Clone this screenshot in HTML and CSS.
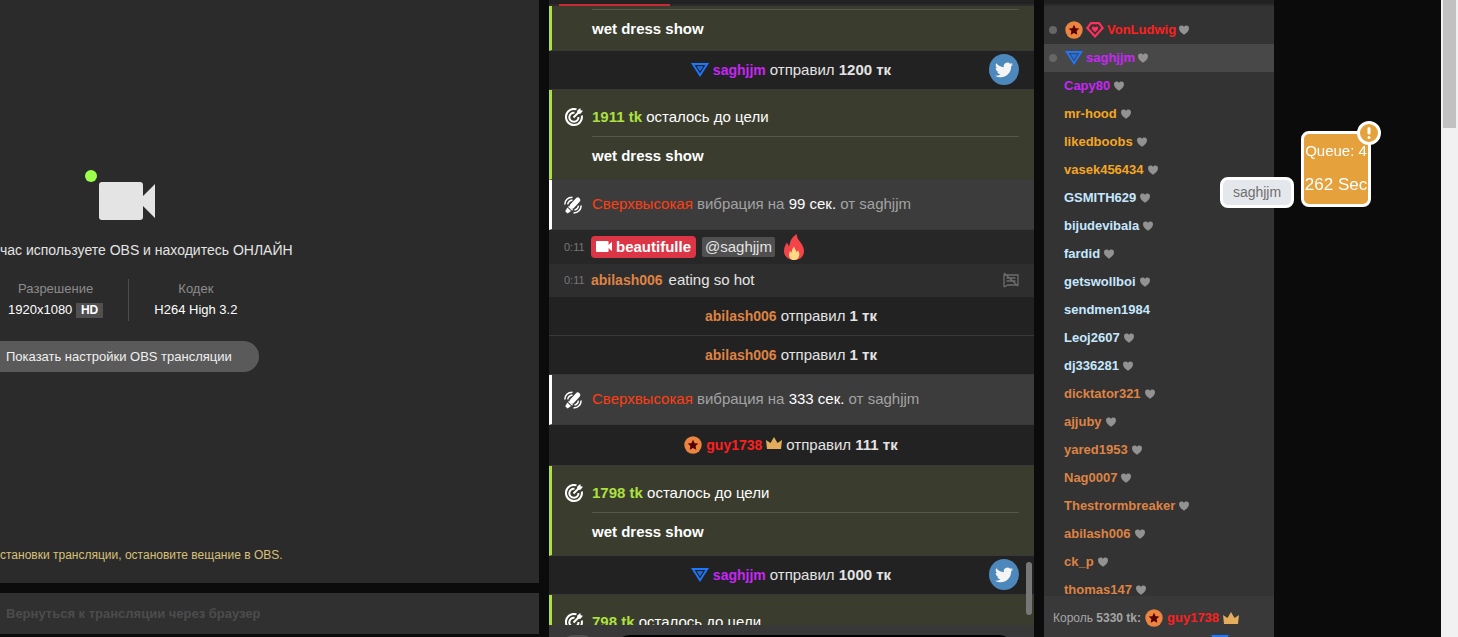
FILE: index.html
```
<!DOCTYPE html>
<html lang="ru">
<head>
<meta charset="utf-8">
<title>Трансляция</title>
<link rel="stylesheet" href="styles.css">
</head>
<body>
<svg class="sprite" aria-hidden="true">
  <symbol id="i-cam" viewBox="0 0 56 38"><path d="M3 0H41a3 3 0 0 1 3 3V14L56 2V36L44 24V35a3 3 0 0 1-3 3H3a3 3 0 0 1-3-3V3a3 3 0 0 1 3-3Z"/></symbol>
  <symbol id="i-tri" viewBox="0 0 18 14"><path fill="#1c78ff" fill-rule="evenodd" d="M0 0H18L9 14ZM3.600 2L9 10.400 14.400 2ZM5.800 3.200H12.200L9 8.200ZM8.300 4.600L9 5.700 9.700 4.600Z"/></symbol>
  <symbol id="i-star" viewBox="0 0 18 18"><circle cx="9" cy="9" r="8.7" fill="#eb8540"/><path fill="#530000" d="M9 3.8L10.6 7.2 14.3 7.6 11.6 10.1 12.3 13.8 9 12 5.7 13.8 6.4 10.1 3.7 7.6 7.4 7.2Z"/></symbol>
  <symbol id="i-gem" viewBox="0 0 18 16"><path fill="none" stroke="#ff2f5e" stroke-width="2.200" d="M5 1.200H13L16.700 6 9 14.400 1.300 6Z"/><path fill="#ff2f5e" d="M9 10.200L6 7.200C5 5 7.500 3.500 9 5.500 10.500 3.500 13 5 12 7.200Z"/></symbol>
  <symbol id="i-heart" viewBox="0 0 10 10"><path d="M5 9.700C2 7.500 0 5.800 0 3.200 0 0 4 0 5 1.900 6 0 10 0 10 3.200 10 5.800 8 7.500 5 9.700Z"/></symbol>
  <symbol id="i-crown" viewBox="0 0 16 12"><path fill="#e3ad5c" d="M1 12L0 3 4.500 6 8 0 11.500 6 16 3 15 12Z"/></symbol>
  <symbol id="i-goal" viewBox="0 0 18 18"><g fill="none" stroke="#fff" stroke-width="2"><path d="M11.500 1.400A8 8 0 1 0 16.800 7.500"/><path d="M9.500 4.700A4.600 4.600 0 1 0 13.500 9"/></g><path fill="#fff" d="M7.800 8.800L12 4.600 12.300 2.500 15.300 0 15.700 2.300 18 2.700 15.500 5.700 13.400 6 9.200 10.200Z"/></symbol>
  <symbol id="i-vibe" viewBox="0 0 18 18"><path stroke="#fff" stroke-width="5" stroke-linecap="round" d="M8 10.200L13.800 4"/><path fill="#fff" d="M4.800 9.800L9.200 14 8 14.600 4.200 11ZM3.400 11.600L7 15 3.600 17.600 1.200 15.300Z"/><g fill="none" stroke="#fff" stroke-width="1.500"><path d="M.8 8.500Q1.200 1.500 8.500 1.200M3.700 8.300Q4.500 4.400 8.500 3.900M17.200 9.500Q16.800 16.500 9.500 16.900M14.500 9.700Q13.800 13.500 10.500 14.100"/></g></symbol>
  <symbol id="i-fire" viewBox="0 0 20 26"><path fill="#f4444a" d="M12.700 0C13 5 15 6 17.300 9.500 18.500 11.500 20 13.500 20 17 20 22.500 16 26 10.500 26 4.500 26 0 22.500 0 17 0 13.500 1.500 10.500 3 8.500L5 12.500C6.500 8 6.500 4 12.700 0Z"/><path fill="#ffd983" d="M10 12.500C11 15 12 16 12.500 18L14 16.500C15.500 18.500 15.500 20 15.200 21.500 14.500 24.500 13 26 10 26 7 26 5 24 5 21 5 19.500 5.500 18 6.300 17L7.500 19C8 16.500 8 15 10 12.500Z"/></symbol>
  <symbol id="i-bird" viewBox="0 0 24 24"><path fill="#f4f4f4" d="M23.950 4.570a10 10 0 0 1-2.820.770 4.960 4.960 0 0 0 2.160-2.720c-.950.550-2 .950-3.130 1.180a4.920 4.920 0 0 0-8.380 4.480C7.690 8.090 4.070 6.130 1.640 3.160a4.820 4.820 0 0 0-.670 2.470c0 1.710.870 3.210 2.190 4.100a4.900 4.900 0 0 1-2.230-.620v.060a4.920 4.920 0 0 0 3.950 4.830 5 5 0 0 1-2.210.080 4.940 4.940 0 0 0 4.600 3.420A9.870 9.870 0 0 1 0 19.540a13.990 13.990 0 0 0 7.560 2.210c9.050 0 14-7.500 14-13.980 0-.210 0-.420-.020-.630a9.940 9.940 0 0 0 2.460-2.550Z"/></symbol>
  <symbol id="i-mute" viewBox="0 0 16 16"><path fill="none" stroke="#6c6c6c" stroke-width="1.300" d="M1 15V3H15V13H5L1 15M3.500 6H12.500M3.500 9H12.500M1 1L15 14"/></symbol>
</svg>

<main class="page">
  <div class="stream">
    <section class="stream-info">
      <div class="camera"><i class="online"></i><svg><use href="#i-cam"/></svg></div>
      <p class="status">час используете OBS и находитесь ОНЛАЙН</p>
      <dl class="specs">
        <div><dt>Разрешение</dt><dd>1920x1080 <span class="hd">HD</span></dd></div>
        <div><dt>Кодек</dt><dd>H264 High 3.2</dd></div>
      </dl>
      <button class="settings" type="button">Показать настройки OBS трансляции</button>
      <p class="hint">становки трансляции, остановите вещание в OBS.</p>
    </section>
    <button class="back" type="button" disabled>Вернуться к трансляции через браузер</button>
  </div>

  <section class="chat">
    <header class="tabs"><i></i></header>
    <div class="log">
      <div class="goal tail"><p class="topic">wet dress show</p></div>
      <div class="tip"><svg class="tri"><use href="#i-tri"/></svg><b class="purple">saghjjm</b><span>отправил <b>1200 тк</b></span><span class="twitter"><svg><use href="#i-bird"/></svg></span></div>
      <div class="goal"><svg class="lead"><use href="#i-goal"/></svg><p class="left"><b>1911 tk</b> осталось до цели</p><p class="topic">wet dress show</p></div>
      <div class="vibe"><svg class="lead"><use href="#i-vibe"/></svg><p><em>Сверхвысокая</em> вибрация на <strong>99 сек.</strong> от saghjjm</p></div>
      <div class="msg"><time>0:11</time><b class="model"><svg><use href="#i-cam"/></svg>beautifulle</b><span class="mention">@saghjjm</span><svg class="fire"><use href="#i-fire"/></svg></div>
      <div class="msg alt"><time>0:11</time><b class="orange">abilash006</b><span>eating so hot</span><button class="mute" type="button" aria-label="Заглушить"><svg><use href="#i-mute"/></svg></button></div>
      <div class="tip"><b class="orange">abilash006</b><span>отправил <b>1 тк</b></span></div>
      <div class="tip"><b class="orange">abilash006</b><span>отправил <b>1 тк</b></span></div>
      <div class="vibe"><svg class="lead"><use href="#i-vibe"/></svg><p><em>Сверхвысокая</em> вибрация на <strong>333 сек.</strong> от saghjjm</p></div>
      <div class="tip tall"><svg class="star"><use href="#i-star"/></svg><b class="red">guy1738</b><svg class="crown"><use href="#i-crown"/></svg><span>отправил <b>111 тк</b></span></div>
      <div class="goal"><svg class="lead"><use href="#i-goal"/></svg><p class="left"><b>1798 tk</b> осталось до цели</p><p class="topic">wet dress show</p></div>
      <div class="tip"><svg class="tri"><use href="#i-tri"/></svg><b class="purple">saghjjm</b><span>отправил <b>1000 тк</b></span><span class="twitter"><svg><use href="#i-bird"/></svg></span></div>
      <div class="goal"><svg class="lead"><use href="#i-goal"/></svg><p class="left"><b>798 tk</b> осталось до цели</p></div>
      <i class="log-thumb"></i>
    </div>
    <footer class="composer"><i class="chip"></i><i class="field"></i></footer>
  </section>

  <section class="users">
    <header class="tabs"></header>
    <ul>
      <li class="red marked"><svg class="star"><use href="#i-star"/></svg><svg class="gem"><use href="#i-gem"/></svg>VonLudwig<svg class="heart"><use href="#i-heart"/></svg></li>
      <li class="purple marked active"><svg class="tri"><use href="#i-tri"/></svg>saghjjm<svg class="heart"><use href="#i-heart"/></svg></li>
      <li class="purple">Capy80<svg class="heart"><use href="#i-heart"/></svg></li>
      <li class="gold">mr-hood<svg class="heart"><use href="#i-heart"/></svg></li>
      <li class="gold">likedboobs<svg class="heart"><use href="#i-heart"/></svg></li>
      <li class="gold">vasek456434<svg class="heart"><use href="#i-heart"/></svg></li>
      <li class="pale">GSMITH629<svg class="heart"><use href="#i-heart"/></svg></li>
      <li class="pale">bijudevibala<svg class="heart"><use href="#i-heart"/></svg></li>
      <li class="pale">fardid<svg class="heart"><use href="#i-heart"/></svg></li>
      <li class="pale">getswollboi<svg class="heart"><use href="#i-heart"/></svg></li>
      <li class="pale">sendmen1984</li>
      <li class="pale">Leoj2607<svg class="heart"><use href="#i-heart"/></svg></li>
      <li class="pale">dj336281<svg class="heart"><use href="#i-heart"/></svg></li>
      <li class="orange">dicktator321<svg class="heart"><use href="#i-heart"/></svg></li>
      <li class="orange">ajjuby<svg class="heart"><use href="#i-heart"/></svg></li>
      <li class="orange">yared1953<svg class="heart"><use href="#i-heart"/></svg></li>
      <li class="orange">Nag0007<svg class="heart"><use href="#i-heart"/></svg></li>
      <li class="orange">Thestrormbreaker<svg class="heart"><use href="#i-heart"/></svg></li>
      <li class="orange">abilash006<svg class="heart"><use href="#i-heart"/></svg></li>
      <li class="orange">ck_p<svg class="heart"><use href="#i-heart"/></svg></li>
      <li class="orange">thomas147<svg class="heart"><use href="#i-heart"/></svg></li>
    </ul>
    <footer class="king">
      <div><span>Король <b>5330 tk:</b></span><svg class="star"><use href="#i-star"/></svg><b class="red">guy1738</b><svg class="crown"><use href="#i-crown"/></svg></div>
      <svg class="tri"><use href="#i-tri"/></svg>
    </footer>
  </section>
</main>

<aside class="queue"><span>Queue: 4</span><span class="secs">262 Sec</span><i class="alert"><svg viewBox="0 0 24 24"><circle cx="12" cy="12" r="10.500" fill="#e5a13c" stroke="#fff" stroke-width="3"/><path stroke="#fff" stroke-width="3" stroke-linecap="round" d="M12 7.500V12M12 16.500V16.600"/></svg></i></aside>
<div class="bubble">saghjjm</div>
<div class="page-scroll"><i></i></div>
</body>
</html>
```
FILE: styles.css
```
* { box-sizing: border-box; }
body {
  margin: 0;
  height: 100vh;
  overflow: hidden;
  background: #0b0b0b;
  color: #e4e4e4;
  font: 15px/18px "Liberation Sans", Arial, sans-serif;
}
p, dl, dd, ul { margin: 0; padding: 0; }
button { font: inherit; border: 0; }
svg { display: block; flex: none; }
.sprite { position: absolute; width: 0; height: 0; }

.page {
  display: grid;
  grid-template-columns: minmax(0, 539fr) minmax(0, 485fr) minmax(0, 230fr) 174px;
  column-gap: 10px;
  height: 100vh;
}

.red { color: #ff1f1f; }
.purple { color: #c727f5; }
.gold { color: #f5a623; }
.pale { color: #c6e8ff; }
.orange { color: #de8344; }
.tri { width: 18px; height: 14px; }
.star { width: 18px; height: 18px; }
.gem { width: 18px; height: 16px; }
.crown { width: 16px; height: 12px; }
.heart { width: 10px; height: 10px; fill: #929292; }

/* Stream status */
.stream { display: flex; flex-direction: column; gap: 10px; padding-bottom: 3px; }
.stream-info {
  flex: 1;
  display: flex;
  flex-direction: column;
  align-items: flex-start;
  background: #2b2b2b;
  padding: 170px 0 18px;
  white-space: nowrap;
  overflow: hidden;
}
.camera { display: flex; align-items: flex-start; padding-left: 85px; gap: 2px; fill: #e4e4e4; }
.camera svg { width: 56px; height: 38px; margin-top: 12px; }
.online { width: 12px; height: 12px; border-radius: 50%; background: #9cff4c; }
.status { margin-top: 21px; font-size: 14px; }
.specs { display: flex; margin-top: 20px; font-size: 13px; line-height: 20px; text-align: center; }
.specs div { padding: 0 25px; }
.specs div:first-child { padding-left: 8px; border-right: 1px solid #4c4c4c; }
.specs dt { color: #8c8c8c; }
.specs dd { color: #fff; line-height: 22px; }
.hd { display: inline-block; padding: 0 5px; background: #505050; font-size: 12px; line-height: 15px; font-weight: bold; }
.settings {
  margin-top: 20px;
  height: 31px;
  padding: 0 27px 0 6px;
  border-radius: 0 16px 16px 0;
  background: #5a5a5a;
  color: #f0f0f0;
  font-size: 13px;
}
.hint { margin-top: auto; color: #d8c078; font-size: 12px; line-height: 20px; }
.back { height: 41px; padding: 0 6px; text-align: left; background: #303030; color: #4c4c4c; font-size: 13px; font-weight: bold; }

/* Chat */
.chat, .users { display: flex; flex-direction: column; min-height: 0; height: 100vh; }
.tabs { flex: none; height: 6px; background: #222; border-bottom: 2px solid #2b2b2b; }
.tabs i { display: block; width: 111px; height: 6px; margin-left: 10px; border-bottom: 2px solid #c52a35; }
.log { position: relative; flex: 1; min-height: 0; overflow: hidden; white-space: nowrap; }
.log > div { border-bottom: 1px solid #383838; }
.goal {
  display: grid;
  grid-template-columns: 18px 1fr;
  column-gap: 9px;
  align-items: center;
  padding: 8px 15px 5px 13px;
  background: #3a3d2e;
  border-left: 3px solid #ade040;
  color: #fff;
}
.goal p { grid-column: 2; line-height: 38px; }
.goal .left b { color: #ade040; }
.goal .topic { border-top: 1px solid #55594a; font-weight: bold; line-height: 37px; }
.goal.tail { padding-top: 3px; padding-bottom: 3px; }
.lead { width: 18px; height: 18px; }
.tip {
  position: relative;
  display: flex;
  justify-content: center;
  align-items: center;
  gap: 4px;
  height: 39px;
  background: #222;
  padding: 0 1px 1px 0;
}
.tip.tall { height: 41px; }
.tip .crown { margin-bottom: 4px; }
.tip > b, .msg > .orange { font-size: 14px; }
.tip span b { font-size: 15px; }
.twitter {
  position: absolute;
  right: 15px;
  top: 3px;
  display: flex;
  align-items: center;
  justify-content: center;
  width: 30px;
  height: 31px;
  border-radius: 50%;
  background: #4c88bc;
}
.twitter svg { width: 18px; height: 18px; }
.vibe {
  display: flex;
  align-items: center;
  gap: 10px;
  height: 50px;
  padding-left: 12px;
  border-left: 3px solid #fff;
  background: #3c3c3c;
  color: #a3a3a3;
}
.vibe p { padding-bottom: 2px; }
.vibe em { color: #ff3e12; font-style: normal; }
.vibe strong { color: #fff; font-weight: normal; }
.log > .msg { display: flex; align-items: center; gap: 6px; height: 34px; padding: 0 15px 1px; background: #272727; border: 0; }
.log > .msg.alt { height: 33px; background: #2e2e2e; }
.msg time { width: 21px; color: #777; font-size: 11px; }
.model { display: flex; align-items: center; gap: 4px; height: 22px; padding: 0 5px; border-radius: 4px; background: #dc3545; color: #fff; }
.model svg { width: 16px; height: 11px; fill: #fff; }
.mention { padding: 1px 3px; border-radius: 2px; background: #505050; }
.fire { width: 20px; height: 26px; margin-left: 3px; }
.mute { margin-left: auto; padding: 0; background: none; }
.mute svg { width: 16px; height: 16px; }
.log-thumb { position: absolute; right: 2px; bottom: 10px; width: 6px; height: 53px; border-radius: 3px; background: #777; }
.composer { display: flex; gap: 22px; height: 12px; padding: 10px 20px 0 14px; background: #383838; overflow: hidden; }
.composer .chip { width: 30px; height: 20px; border-radius: 10px; background: #505050; }
.composer .field { flex: 1; height: 30px; border-radius: 15px; background: #000; }

/* Users */
.users { background: #333; }
.users ul { flex: 1; min-height: 0; overflow: hidden; padding-top: 10px; list-style: none; font-size: 13px; font-weight: bold; }
.users li { display: flex; align-items: center; gap: 4px; height: 28px; padding-left: 20px; }
.users li.marked { padding-left: 5px; gap: 3px; }
.marked::before { content: ""; width: 8px; height: 8px; margin-right: 5px; border-radius: 50%; background: #666; }
.users li.active { background: #484848; }
.king { display: flex; flex-direction: column; align-items: flex-start; gap: 8px; height: 41px; padding: 13px 9px 0; background: #393939; overflow: hidden; color: #a5a5a5; font-size: 12px; white-space: nowrap; }
.king div { display: flex; align-items: center; gap: 4px; }
.king div .red { font-size: 13px; }
.king > .tri { margin-left: 158px; }

/* Floating widgets */
.queue {
  position: fixed;
  top: 131px;
  right: 87px;
  display: flex;
  flex-direction: column;
  align-items: center;
  gap: 16px;
  width: 70px;
  height: 76px;
  padding-top: 8px;
  border: 3px solid #fff;
  border-radius: 8px;
  background: #e5a13c;
  color: #fff;
  white-space: nowrap;
}
.queue .secs { font-size: 17px; }
.alert { position: absolute; top: -13px; right: -13px; }
.alert svg { width: 24px; height: 24px; }
.bubble {
  position: fixed;
  top: 177px;
  right: 164px;
  width: 74px;
  height: 31px;
  border: 3px solid #fff;
  border-radius: 8px;
  background: #e4e7ec;
  color: #6f6f6f;
  font-size: 14px;
  line-height: 25px;
  text-align: center;
}
.page-scroll { position: fixed; top: 0; right: 0; bottom: 0; width: 17px; padding: 0 2px; background: #f1f1f1; }
.page-scroll i { display: block; height: 128px; background: #c1c1c1; }
```
